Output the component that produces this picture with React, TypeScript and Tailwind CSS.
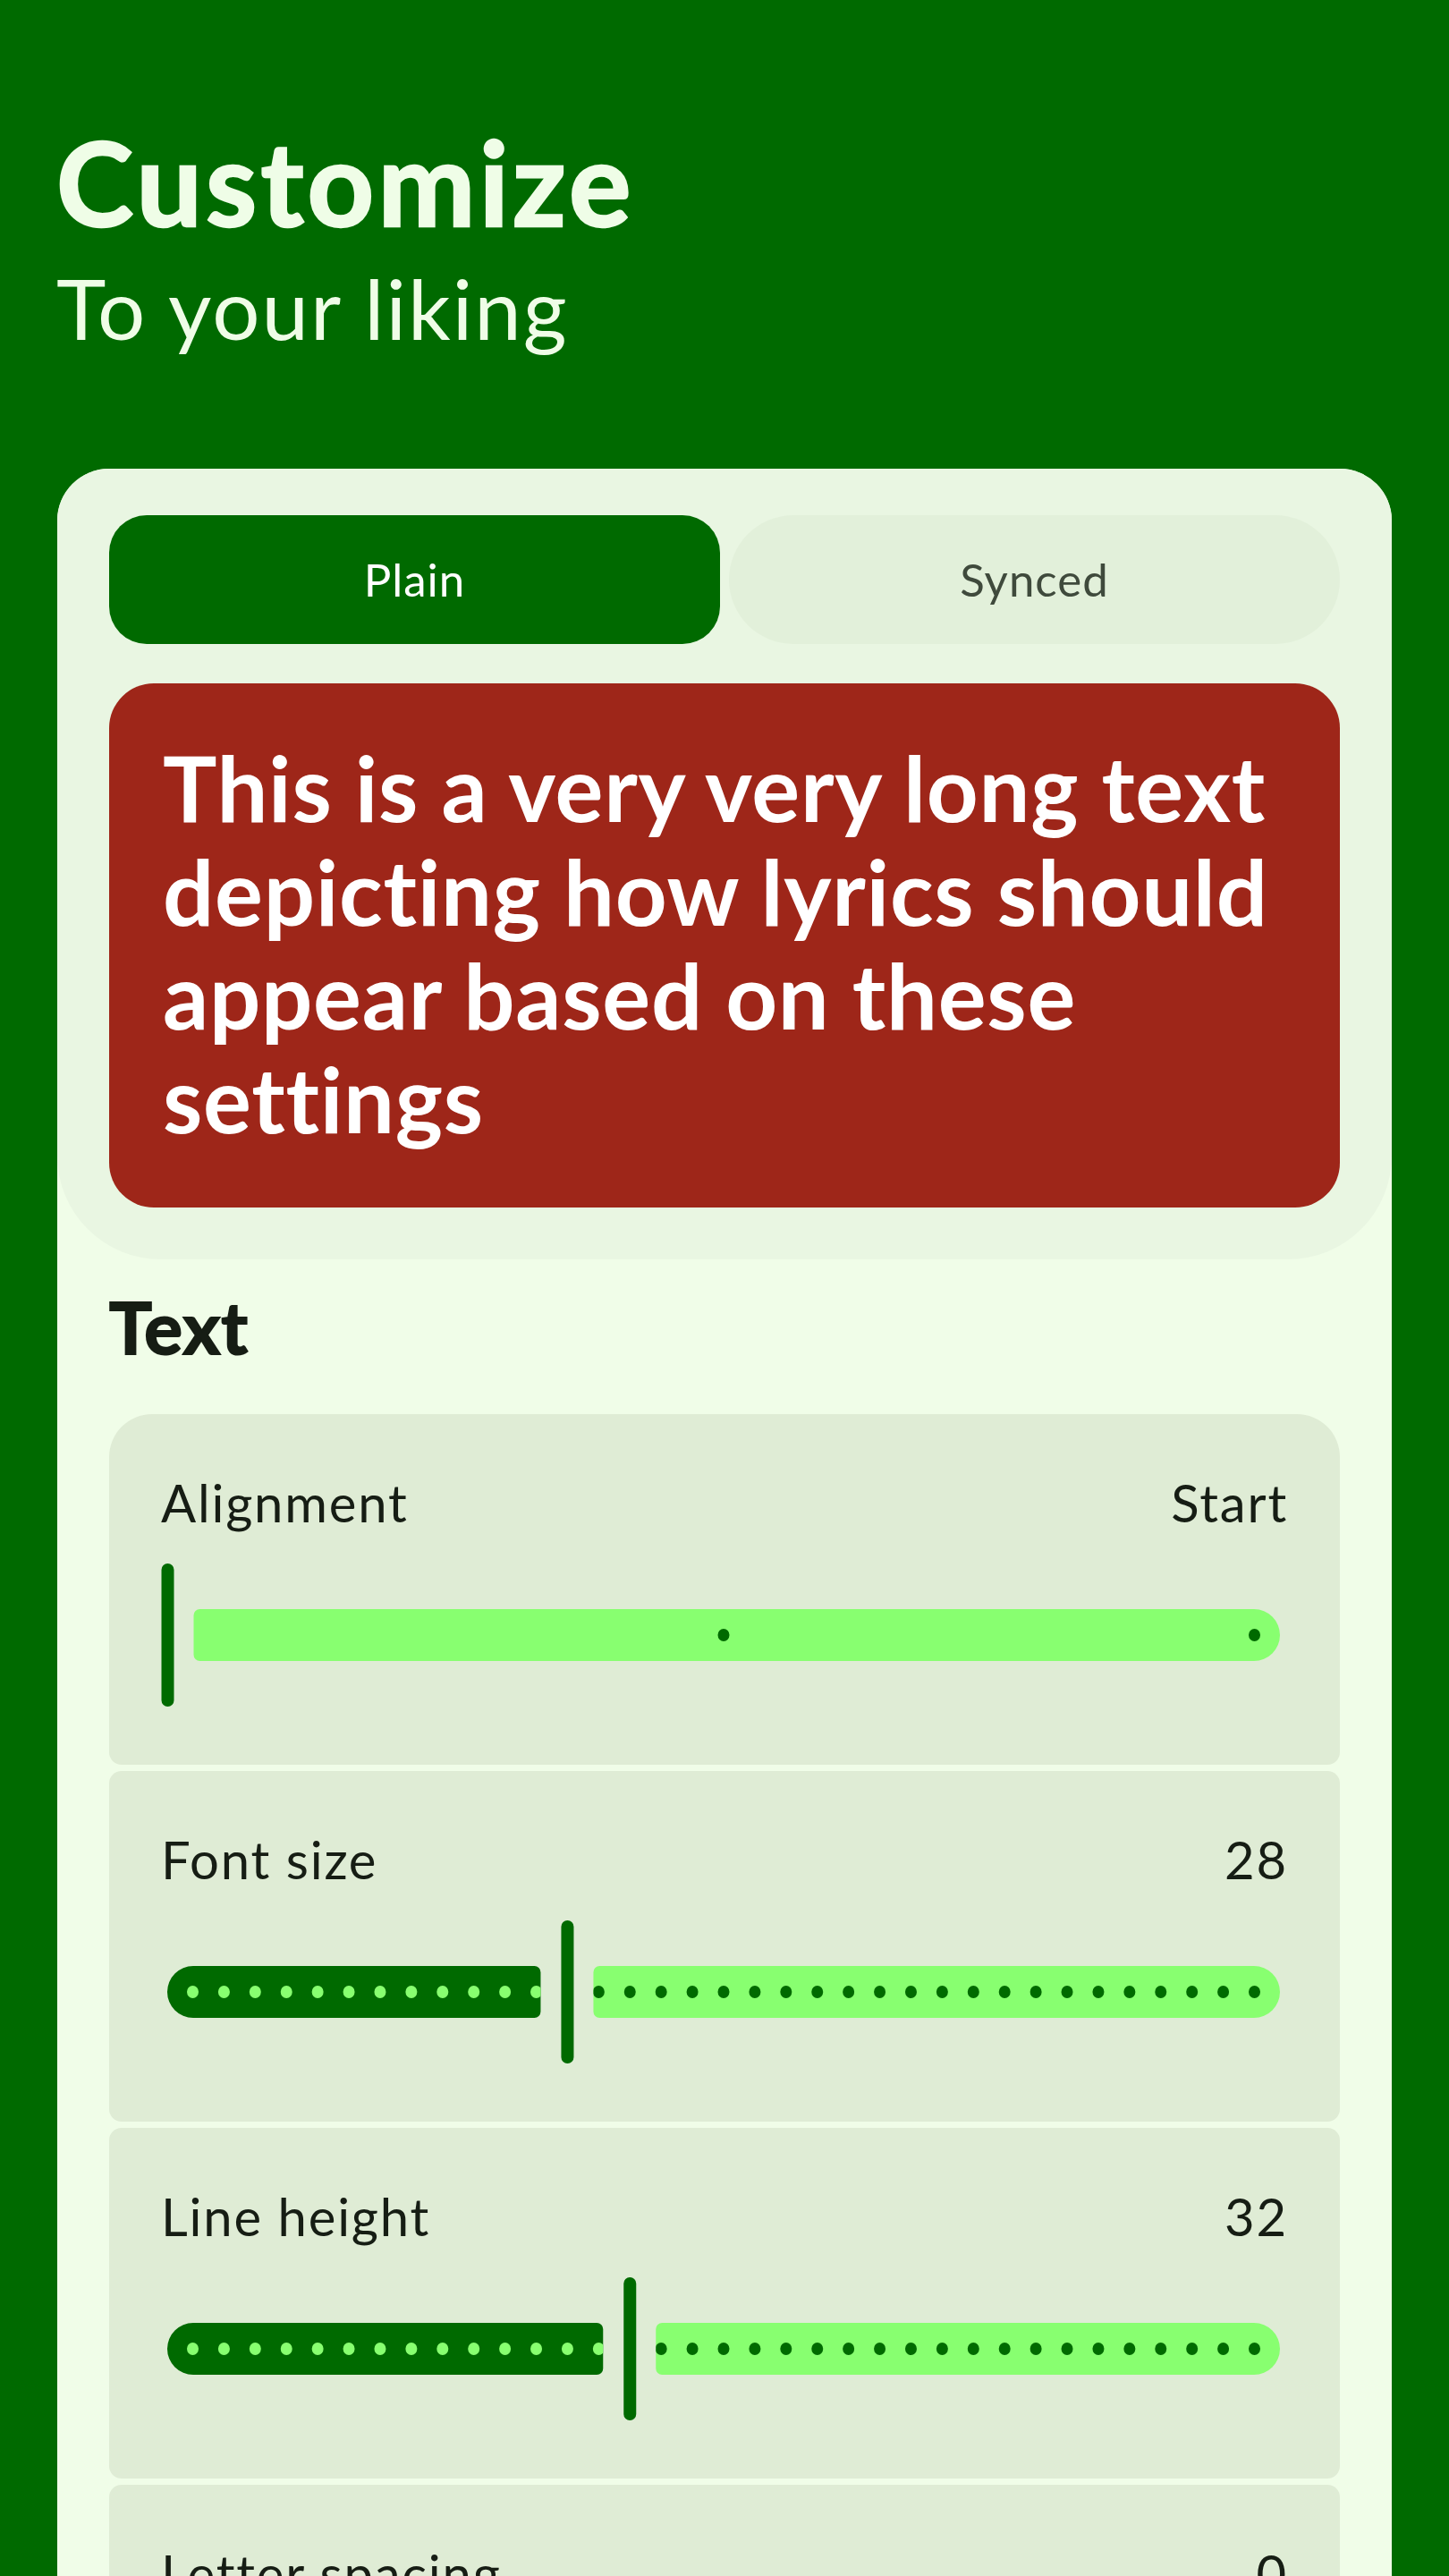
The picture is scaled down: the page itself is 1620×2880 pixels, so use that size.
import { useId } from "react";

const GREEN = "#006a00";
const LIME = "#88ff70";

// slider drawing geometry (px, relative to the card's inner box)
const W = 1259;
const H = 160;
const TX0 = 7;
const TX1 = 1251;
const TY = 51;
const TH = 58;
const STOP0 = 35.5;
const STOP1 = 1222.5;

function segPath(x: number, y: number, w: number, h: number, rl: number, rr: number) {
  return `M${x + rl},${y} H${x + w - rr} A${rr},${rr} 0 0 1 ${x + w},${y + rr} V${y + h - rr} A${rr},${rr} 0 0 1 ${x + w - rr},${y + h} H${x + rl} A${rl},${rl} 0 0 1 ${x},${y + h - rl} V${y + rl} A${rl},${rl} 0 0 1 ${x + rl},${y} Z`;
}

function Slider({ stops, index, thumbX }: { stops: number; index: number; thumbX?: number }) {
  const id = useId().replace(/:/g, "");
  const step = (STOP1 - STOP0) / (stops - 1);
  const tx = thumbX ?? STOP0 + index * step;
  const activeEnd = tx - 30;
  const inactiveStart = tx + 29;
  const hasActive = activeEnd - TX0 > 20;
  const dots = Array.from({ length: stops }, (_, i) => STOP0 + i * step);

  const activeD = segPath(TX0, TY, activeEnd - TX0, TH, 29, 7);
  const inactiveD = segPath(inactiveStart, TY, TX1 - inactiveStart, TH, 7, 29);

  return (
    <svg width={W} height={H} viewBox={`0 0 ${W} ${H}`} className="block">
      <defs>
        <clipPath id={`a${id}`}>
          <path d={activeD} />
        </clipPath>
        <clipPath id={`i${id}`}>
          <path d={inactiveD} />
        </clipPath>
      </defs>
      {hasActive && (
        <>
          <path d={activeD} fill={GREEN} />
          <g clipPath={`url(#a${id})`}>
            {dots.map((x, i) =>
              i < index ? <ellipse key={i} cx={x} cy={TY + TH / 2} rx={6.5} ry={7} fill={LIME} /> : null
            )}
          </g>
        </>
      )}
      <path d={inactiveD} fill={LIME} />
      <g clipPath={`url(#i${id})`}>
        {dots.map((x, i) =>
          i > index ? <ellipse key={i} cx={x} cy={TY + TH / 2} rx={6.5} ry={7} fill={GREEN} /> : null
        )}
      </g>
      <rect x={tx - 7} y={0} width={14} height={H} rx={7} fill={GREEN} />
    </svg>
  );
}

function SettingCard({
  label,
  value,
  first,
  children,
}: {
  label: string;
  value: string;
  first?: boolean;
  children: React.ReactNode;
}) {
  return (
    <div
      className={
        "bg-[#dfecd5] px-[58px] pt-[55px] pb-[65px] " +
        (first ? "rounded-t-[48px] rounded-b-[14px]" : "rounded-[14px]")
      }
    >
      <div className="flex items-center justify-between text-[58px] leading-[87px] tracking-[1.8px] text-[#161d14]">
        <span>{label}</span>
        <span>{value}</span>
      </div>
      <div className="mt-[25px]">{children}</div>
    </div>
  );
}

export default function App() {
  return (
    <div
      className="h-[2880px] w-[1620px] overflow-hidden bg-[#006a00]"
      style={{ fontFamily: "Lato, 'Noto Sans', sans-serif" }}
    >
      <div className="px-[63px] pt-[125px] text-[#effde7]">
        <h1 className="text-[130px] font-bold leading-[156px] tracking-[4.3px] [-webkit-text-stroke:2.5px_#effde7]">
          Customize
        </h1>
        <p className="mt-[6px] text-[94px] leading-[113px] tracking-[2px]">To your liking</p>
      </div>

      <div className="mx-[64px] mt-[124px] h-[2400px] rounded-t-[58px] bg-[#f0fde8]">
        <div className="rounded-t-[58px] rounded-b-[116px] bg-[#e9f6e2] px-[58px] pt-[52px] pb-[58px]">
          <div className="flex h-[144px] gap-[10px] text-[51px] tracking-[1px]">
            <button className="flex flex-1 items-center justify-center rounded-[42px] bg-[#006a00] text-white">
              Plain
            </button>
            <button className="flex flex-1 items-center justify-center rounded-full bg-[#e2f0da] text-[#3f4a3c]">
              Synced
            </button>
          </div>

          <div className="mt-[44px] rounded-[50px] bg-[#9e2619] px-[60px] pt-[58px] pb-[64px] text-[101px] font-bold leading-[116px] tracking-[0.7px] text-white">
            <div className="whitespace-nowrap">This is a very very long text</div>
            <div className="whitespace-nowrap">depicting how lyrics should</div>
            <div className="whitespace-nowrap">appear based on these</div>
            <div className="whitespace-nowrap">settings</div>
          </div>
        </div>

        <div className="px-[58px]">
          <h2 className="mt-[27px] text-[80px] font-bold leading-[96px] tracking-[1px] text-[#161d14] [-webkit-text-stroke:2px_#161d14]">
            Text
          </h2>

          <div className="mt-[50px] flex flex-col gap-[7px]">
            <SettingCard label="Alignment" value="Start" first>
              <Slider stops={3} index={0} thumbX={7.5} />
            </SettingCard>
            <SettingCard label="Font size" value="28">
              <Slider stops={35} index={12} />
            </SettingCard>
            <SettingCard label="Line height" value="32">
              <Slider stops={35} index={14} />
            </SettingCard>
            <SettingCard label="Letter spacing" value="0">
              <Slider stops={21} index={10} />
            </SettingCard>
          </div>
        </div>
      </div>
    </div>
  );
}
